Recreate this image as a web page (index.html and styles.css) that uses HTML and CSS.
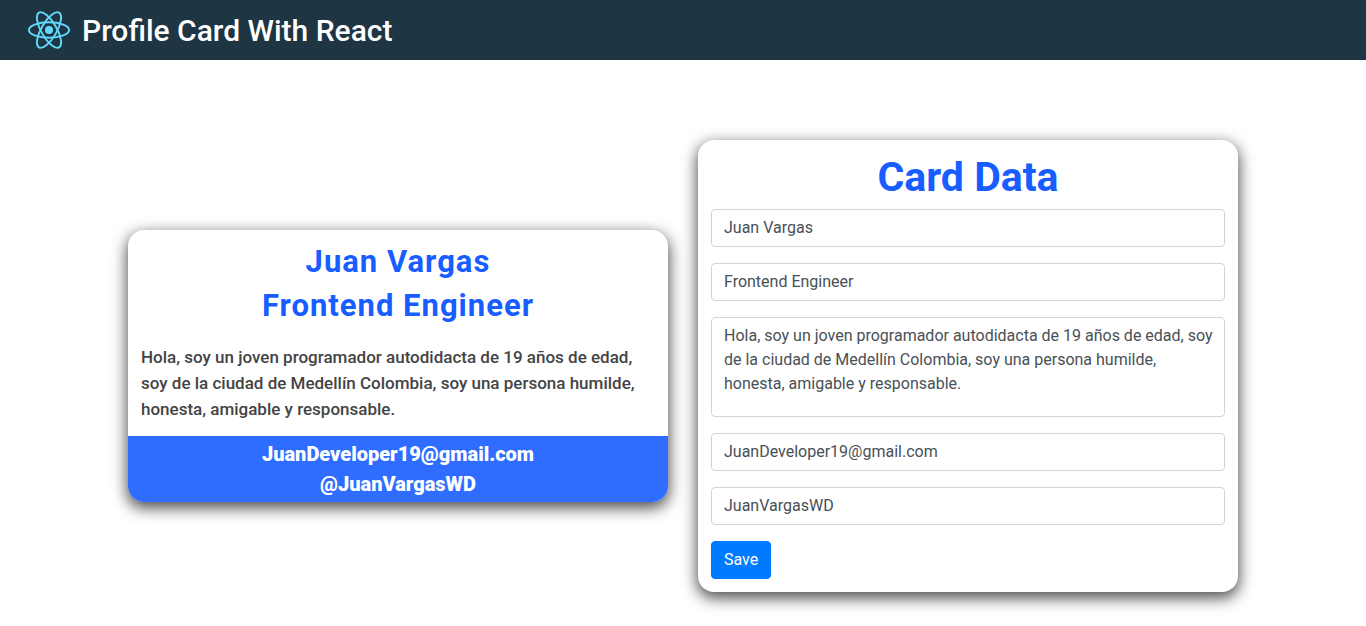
FILE: index.html
```
<!DOCTYPE html>
<html lang="es">
<head>
<meta charset="utf-8">
<meta name="viewport" content="width=device-width, initial-scale=1">
<title>Profile Card With React</title>
<link rel="stylesheet" href="styles.css">
</head>
<body>
<header class="navbar">
  <svg class="logo" viewBox="0 0 44 40" aria-hidden="true">
    <g fill="none" stroke="#61dafb" stroke-width="1.9">
      <ellipse cx="22" cy="20" rx="20.1" ry="7.7"/>
      <ellipse cx="22" cy="20" rx="20.1" ry="7.7" transform="rotate(60 22 20)"/>
      <ellipse cx="22" cy="20" rx="20.1" ry="7.7" transform="rotate(120 22 20)"/>
    </g>
    <circle cx="22" cy="20" r="4" fill="#61dafb"/>
  </svg>
  <h1 class="brand">Profile Card With React</h1>
</header>
<main class="content">
  <section class="card profile">
    <h2 class="profile-title">Juan Vargas</h2>
    <h2 class="profile-title">Frontend Engineer</h2>
    <p class="bio">Hola, soy un joven programador autodidacta de 19 años de edad, soy de la ciudad de Medellín Colombia, soy una persona humilde, honesta, amigable y responsable.</p>
    <footer class="contact">
      <span>JuanDeveloper19@gmail.com</span>
      <span>@JuanVargasWD</span>
    </footer>
  </section>
  <form class="card data-form">
    <h2 class="form-title">Card Data</h2>
    <input class="field" type="text" aria-label="Name" value="Juan Vargas">
    <input class="field" type="text" aria-label="Job" value="Frontend Engineer">
    <textarea class="field area" aria-label="About">Hola, soy un joven programador autodidacta de 19 años de edad, soy de la ciudad de Medellín Colombia, soy una persona humilde, honesta, amigable y responsable.</textarea>
    <input class="field" type="email" aria-label="Email" value="JuanDeveloper19@gmail.com">
    <input class="field" type="text" aria-label="Username" value="JuanVargasWD">
    <button class="save" type="button">Save</button>
  </form>
</main>
</body>
</html>
```
FILE: styles.css
```
* { box-sizing: border-box; }

body {
  margin: 0;
  min-height: 100vh;
  background: #fff;
  font-family: Roboto, "Liberation Sans", sans-serif;
  font-size: 16px;
  line-height: 24px;
  color: #212529;
}

.navbar {
  display: flex;
  align-items: center;
  gap: 11px;
  height: 60px;
  padding: 0 27px;
  background: #1e3543;
}

.logo { width: 44px; height: 40px; }

.brand {
  margin: 0;
  padding-top: 2px;
  font-size: 30px;
  line-height: 38px;
  font-weight: 500;
  color: #fff;
}

.content {
  display: grid;
  grid-template-columns: 1fr 1fr;
  gap: 30px;
  align-items: center;
  max-width: 1110px;
  margin: 0 auto;
  padding: 80px 0 32px;
}

.card {
  background: #fff;
  border-radius: 16px;
  box-shadow: 0 5px 15px 1px rgba(0, 0, 0, 0.7);
}

.profile { overflow: hidden; padding-top: 10px; }

.profile-title {
  margin: 0;
  font-size: 31px;
  line-height: 44px;
  font-weight: 700;
  letter-spacing: 1px;
  text-align: center;
  color: #175dff;
}

.bio {
  margin: 16px 0 14px;
  padding: 0 13px;
  font-size: 17px;
  line-height: 26px;
  font-weight: 500;
  color: #444;
}

.contact {
  display: flex;
  flex-direction: column;
  align-items: center;
  padding: 3px 0;
  background: #2e6dff;
  color: #fff;
  font-size: 20px;
  line-height: 30px;
  font-weight: 900;
}

.data-form {
  display: flex;
  flex-direction: column;
  align-items: flex-start;
  gap: 16px;
  padding: 13px;
}

.form-title {
  width: 100%;
  margin: 0 0 -8px;
  font-size: 41px;
  line-height: 48px;
  font-weight: 700;
  text-align: center;
  color: #175dff;
}

.field {
  width: 100%;
  height: 38px;
  padding: 5px 12px 7px;
  border: 1px solid #ced4da;
  border-radius: 4px;
  background: #fff;
  font: inherit;
  color: #495057;
}

.area {
  display: block;
  height: 100px;
  padding: 6px 10px 6px 12px;
  resize: none;
}

.save {
  height: 38px;
  padding: 6px 12px;
  border: 1px solid #007bff;
  border-radius: 4px;
  background: #007bff;
  font: inherit;
  color: #fff;
}
```
